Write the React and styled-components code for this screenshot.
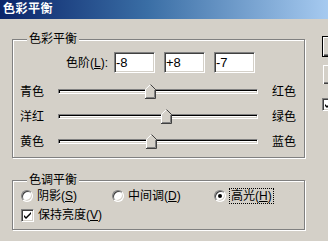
import React from "react";
import styled, { createGlobalStyle } from "styled-components";

const Global = createGlobalStyle`
  html, body { margin: 0; padding: 0; background: #d4d0c8; }
  * { box-sizing: border-box; }
`;

const Window = styled.div`
  width: 328px;
  height: 241px;
  background: #d4d0c8;
  overflow: hidden;
  font-family: "Liberation Sans", "Noto Sans CJK SC", sans-serif;
  font-size: 12px;
  color: #000;
`;

const TitleBar = styled.div`
  height: 19px;
  padding-left: 3px;
  background: linear-gradient(to right, #0a246a 0%, #3a6ea5 45%, #a6caf0 100%);
  color: #fff;
  font-weight: bold;
  font-size: 12px;
  line-height: 19px;
  letter-spacing: 0.5px;
`;

const Body = styled.div`
  display: flex;
  align-items: flex-start;
`;

const LeftCol = styled.div`
  flex: none;
  margin: 20px 0 0 12px;
  width: 293px;
  display: flex;
  flex-direction: column;
  gap: 22px;
`;

const Group = styled.div`
  position: relative;
  height: ${(p) => p.$h}px;
  border: 1px solid #808080;
  box-shadow: inset 1px 1px #fff, 1px 1px #fff;
  padding-top: ${(p) => p.$pt}px;
`;

const GroupLabel = styled.span`
  position: absolute;
  top: -8px;
  left: 14px;
  padding: 0 2px;
  background: #d4d0c8;
  line-height: 14px;
`;

const LevelRow = styled.div`
  display: flex;
  align-items: center;
  height: 21px;
`;

const LevelLabel = styled.span`
  width: 95px;
  text-align: right;
  margin-right: 6px;
  line-height: 14px;
`;

const InputGroup = styled.div`
  display: flex;
  gap: 9px;
`;

const NumInput = styled.div`
  width: 41px;
  height: 21px;
  background: #fff;
  border: 1px solid;
  border-color: #808080 #fff #fff #808080;
  box-shadow: inset 1px 1px #404040, inset -1px -1px #d4d0c8;
  padding-left: 1px;
  font-family: "Liberation Sans", Arial, sans-serif;
  font-size: 13px;
  line-height: 19px;
`;

const Sliders = styled.div`
  margin-top: 6px;
`;

const SliderRow = styled.div`
  display: grid;
  grid-template-columns: 38px 200px 1fr;
  align-items: center;
  height: 25px;
  padding-left: 7px;
`;

const SideLabel = styled.span`
  line-height: 14px;
  white-space: nowrap;
  padding-left: ${(p) => (p.$right ? 14 : 0)}px;
`;

const Track = styled.div`
  position: relative;
  height: 5px;
  background: #fff;
  border: 1px solid;
  border-color: #808080 #fff #fff #808080;
  box-shadow: inset 1px 1px #000, inset -1px -1px #d4d0c8;
`;

const ThumbWrap = styled.svg`
  position: absolute;
  top: -6px;
  display: block;
`;

const Thumb = ({ left }) => (
  <ThumbWrap width="11" height="15" viewBox="0 0 11 15" style={{ left }}>
    <polygon points="0,5 5,0 10,5 10,14 0,14" fill="#d4d0c8" />
    <polyline points="0.5,14 0.5,5.3 5.5,0.5" fill="none" stroke="#fff" strokeWidth="1" />
    <polyline points="5.5,0.5 10.5,5.5 10.5,14.5 0,14.5" fill="none" stroke="#404040" strokeWidth="1" />
    <polyline points="9.5,6 9.5,13.5 1,13.5" fill="none" stroke="#808080" strokeWidth="1" />
  </ThumbWrap>
);

const RadioRow = styled.div`
  display: grid;
  grid-template-columns: 91px 102px auto;
  height: 16px;
  padding-left: 8px;
  align-items: center;
`;

const Option = styled.label`
  display: flex;
  align-items: center;
  gap: 4px;
  line-height: 14px;
  white-space: nowrap;
`;

const OptionText = styled.span`
  padding: 0 ${(p) => (p.$focus ? 1 : 0)}px;
  outline: ${(p) => (p.$focus ? "1px dotted #000" : "none")};
`;

const RadioDot = styled.span`
  position: relative;
  width: 12px;
  height: 12px;
  border-radius: 50%;
  border: 1px solid;
  border-color: #808080 #fff #fff #808080;
  box-shadow: inset 1px 1px #404040, inset -1px -1px #d4d0c8;
  background: #fff;
  flex: none;
  &::after {
    content: "";
    display: ${(p) => (p.$on ? "block" : "none")};
    position: absolute;
    left: 3px;
    top: 3px;
    width: 4px;
    height: 4px;
    border-radius: 50%;
    background: #000;
  }
`;

const CheckRow = styled.div`
  display: flex;
  height: 16px;
  margin-top: 3px;
  padding-left: 8px;
  align-items: center;
`;

const CheckBox = styled.span`
  width: 13px;
  height: 13px;
  border: 1px solid;
  border-color: #808080 #fff #fff #808080;
  box-shadow: inset 1px 1px #404040, inset -1px -1px #d4d0c8;
  background: #fff;
  flex: none;
  display: flex;
  align-items: center;
  justify-content: center;
`;

const Check = () => (
  <svg width="7" height="7" viewBox="0 0 7 7">
    <path d="M0 2 L2 4 L7 -1 L7 1 L2 6 L0 4 Z" fill="#000" transform="translate(0,1)" />
  </svg>
);

const RightCol = styled.div`
  flex: none;
  margin-left: 17px;
  padding-top: 17px;
  display: flex;
  flex-direction: column;
`;

const Button = styled.div`
  width: 75px;
  height: 21px;
  margin-top: ${(p) => p.$mt || 0}px;
  border: 1px solid ${(p) => (p.$default ? "#000" : "#d4d0c8")};
  box-shadow: inset 1px 1px #fff, inset -1px -1px #404040, inset -2px -2px #808080;
  display: flex;
  align-items: center;
  justify-content: center;
  line-height: 14px;
`;

const PreviewRow = styled.div`
  display: flex;
  align-items: center;
  gap: 4px;
  margin-top: 12px;
  line-height: 14px;
  white-space: nowrap;
`;

const sliders = [
  { l: "青色", r: "红色", v: -8 },
  { l: "洋红", r: "绿色", v: 8 },
  { l: "黄色", r: "蓝色", v: -7 },
];

export default function App() {
  return (
    <Window>
      <Global />
      <TitleBar>色彩平衡</TitleBar>
      <Body>
        <LeftCol>
          <Group $h={119} $pt={12}>
            <GroupLabel>色彩平衡</GroupLabel>
            <LevelRow>
              <LevelLabel>
                色阶(<u>L</u>):
              </LevelLabel>
              <InputGroup>
                <NumInput>-8</NumInput>
                <NumInput>+8</NumInput>
                <NumInput>-7</NumInput>
              </InputGroup>
            </LevelRow>
            <Sliders>
              {sliders.map((s) => (
                <SliderRow key={s.l}>
                  <SideLabel>{s.l}</SideLabel>
                  <Track>
                    <Thumb left={((s.v + 100) / 200) * 200 - 6.5} />
                  </Track>
                  <SideLabel $right>{s.r}</SideLabel>
                </SliderRow>
              ))}
            </Sliders>
          </Group>
          <Group $h={50} $pt={7}>
            <GroupLabel>色调平衡</GroupLabel>
            <RadioRow>
              <Option>
                <RadioDot />
                <OptionText>
                  阴影(<u>S</u>)
                </OptionText>
              </Option>
              <Option>
                <RadioDot />
                <OptionText>
                  中间调(<u>D</u>)
                </OptionText>
              </Option>
              <Option>
                <RadioDot $on />
                <OptionText $focus>
                  高光(<u>H</u>)
                </OptionText>
              </Option>
            </RadioRow>
            <CheckRow>
              <Option>
                <CheckBox>
                  <Check />
                </CheckBox>
                <OptionText>
                  保持亮度(<u>V</u>)
                </OptionText>
              </Option>
            </CheckRow>
          </Group>
        </LeftCol>
        <RightCol>
          <Button $default>好</Button>
          <Button $mt={7}>取消</Button>
          <PreviewRow>
            <CheckBox>
              <Check />
            </CheckBox>
            <OptionText>
              预览(<u>P</u>)
            </OptionText>
          </PreviewRow>
        </RightCol>
      </Body>
    </Window>
  );
}
